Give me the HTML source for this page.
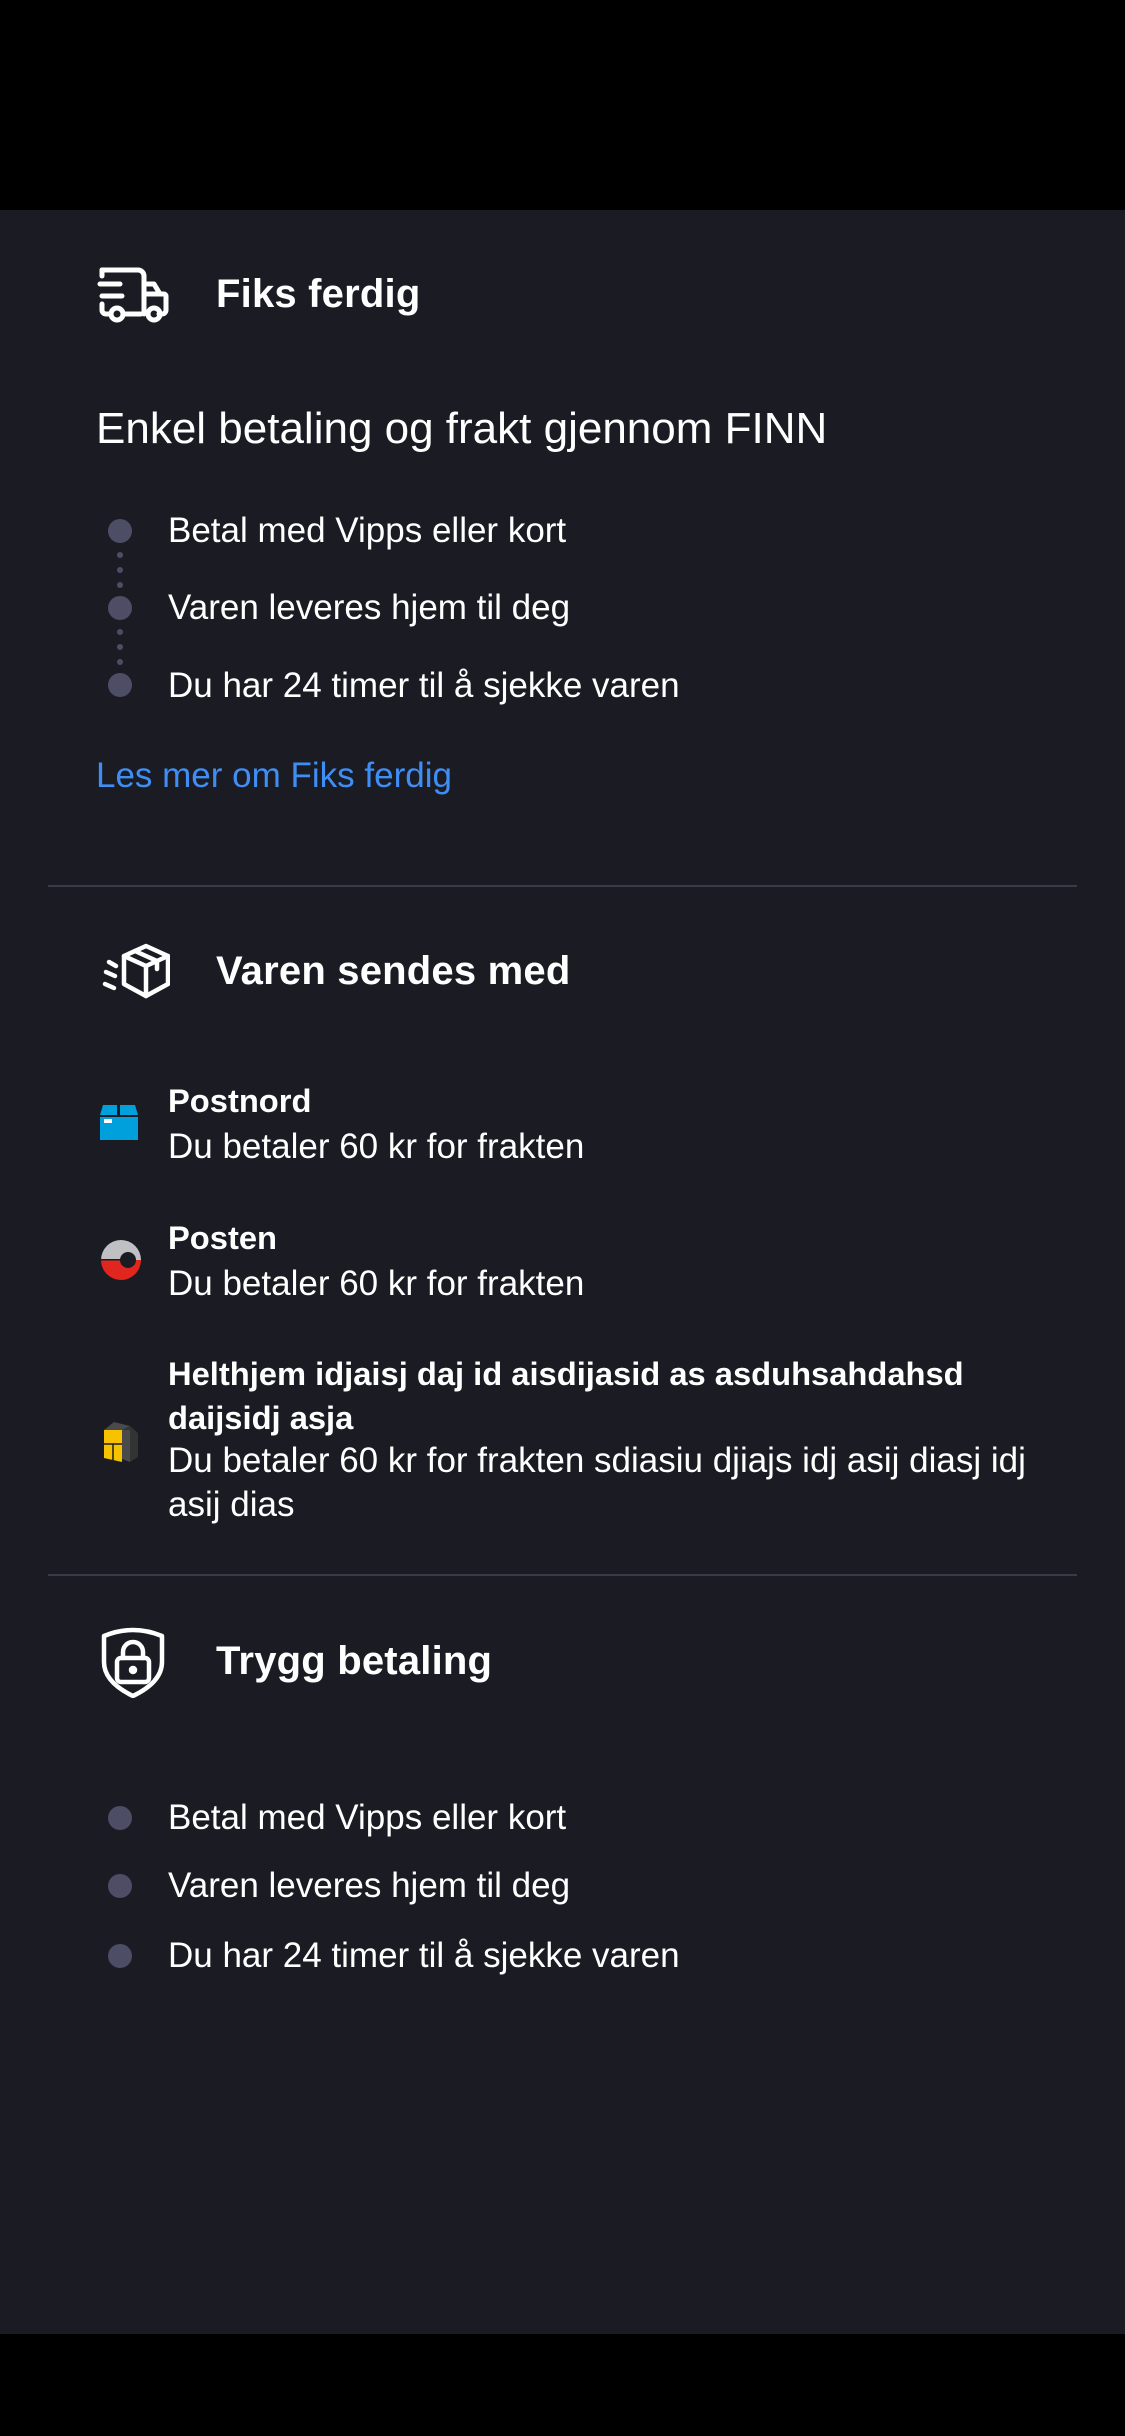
<!DOCTYPE html>
<html><head><meta charset="utf-8"><style>
*{margin:0;padding:0;box-sizing:border-box}
body{width:1125px;height:2436px;background:#1b1c23;position:relative;overflow:hidden;font-family:"Liberation Sans",sans-serif;color:#fff}
.blk{position:absolute;left:0;width:1125px;background:#000}
.t{position:absolute;white-space:nowrap;line-height:1}
.h{font-size:40px;font-weight:bold;letter-spacing:0.2px}
.b{font-size:35px;letter-spacing:0}
.bb{font-size:32.7px;font-weight:bold;letter-spacing:0}
.dot{position:absolute;width:24px;height:24px;border-radius:50%;background:#4d4d66}
.sd{position:absolute;width:6px;height:6px;border-radius:50%;background:#4d4d66}
.hr{position:absolute;left:48px;width:1029px;height:2px;background:#3a3b45}
svg{position:absolute}
</style></head><body>
<div class="blk" style="top:0;height:210px"></div>
<div class="blk" style="top:2334px;height:102px"></div>

<svg style="left:96px;top:262px" width="74" height="62" viewBox="0 0 74 62" fill="none" stroke="#fff" stroke-width="5" stroke-linecap="round" stroke-linejoin="round">
<path d="M6 8h36a6 6 0 0 1 6 6v38"/><path d="M6 8v6"/><path d="M48 22h10l6 10h4a2 2 0 0 1 2 2v14a4 4 0 0 1-4 4h-3"/><path d="M48 32h16"/>
<path d="M4 22h20M6 34h20"/><path d="M6 42v6a4 4 0 0 0 4 4h3"/><path d="M29 52h16"/>
<circle cx="21" cy="52" r="6"/><circle cx="58" cy="52" r="6"/></svg>
<div class="t h" style="left:216px;top:274px">Fiks ferdig</div>

<div class="t" style="left:96px;top:407px;font-size:44px;letter-spacing:0">Enkel betaling og frakt gjennom FINN</div>

<div class="dot" style="left:108px;top:519px"></div>
<div class="dot" style="left:108px;top:596px"></div>
<div class="dot" style="left:108px;top:673px"></div>
<div class="sd" style="left:117px;top:552px"></div><div class="sd" style="left:117px;top:567px"></div><div class="sd" style="left:117px;top:582px"></div>
<div class="sd" style="left:117px;top:629px"></div><div class="sd" style="left:117px;top:644px"></div><div class="sd" style="left:117px;top:659px"></div>
<div class="t b" style="left:168px;top:513px">Betal med Vipps eller kort</div>
<div class="t b" style="left:168px;top:590px">Varen leveres hjem til deg</div>
<div class="t b" style="left:168px;top:668px">Du har 24 timer til å sjekke varen</div>

<div class="t" style="left:96px;top:758px;font-size:35px;color:#3f8ef5">Les mer om Fiks ferdig</div>

<div class="hr" style="top:885px"></div>

<svg style="left:94px;top:942px" width="76" height="62" viewBox="0 0 76 62" fill="none" stroke="#fff" stroke-width="4.5" stroke-linecap="round" stroke-linejoin="round">
<path d="M24 8l-7-4M23 18l-9-4M22 30l-9-4" transform="translate(-2 16)"/>
<path d="M52 4l22 10v28l-22 12l-22-12V14z"/><path d="M30 14l22 10l22-10"/><path d="M52 24v30"/><path d="M41 9l22 10v8"/></svg>
<div class="t h" style="left:216px;top:951px">Varen sendes med</div>

<svg style="left:100px;top:1104px" width="38" height="36" viewBox="0 0 38 36"><path d="M3 1h14v10H0z M20 1h15l3 10H20z" fill="#00a0dc"/><rect x="0" y="13" width="38" height="23" fill="#00a0dc"/><rect x="4" y="15" width="8" height="4" fill="#fff"/></svg>
<div class="t bb" style="left:168px;top:1085px">Postnord</div>
<div class="t b" style="left:168px;top:1129px">Du betaler 60 kr for frakten</div>

<svg style="left:100px;top:1239px" width="42" height="42" viewBox="0 0 42 42"><path d="M1 21a20 20 0 0 1 40 0z" fill="#bfc0c4"/><path d="M1 21a20 20 0 0 0 40 0z" fill="#e0261f"/><circle cx="28" cy="21" r="8" fill="#1b1c23"/><rect x="1" y="20" width="21" height="1.5" fill="#1b1c23"/></svg>
<div class="t bb" style="left:168px;top:1222px">Posten</div>
<div class="t b" style="left:168px;top:1266px">Du betaler 60 kr for frakten</div>

<svg style="left:104px;top:1418px" width="34" height="44" viewBox="0 0 34 44"><path d="M0 12l10-8l16 4v36l-8-3z" fill="#4a4a4a"/><path d="M18 12l8-4l8 7v24l-8 5V12z" fill="#333"/><path d="M0 12h18v32L0 40z" fill="#f7c200"/><path d="M0 26h18M9 26v16" stroke="#1b1c23" stroke-width="1.5"/></svg>
<div class="t bb" style="left:168px;line-height:43.5px;top:1352px">Helthjem idjaisj daj id aisdijasid as asduhsahdahsd<br>daijsidj asja</div>
<div class="t b" style="left:168px;top:1439px;line-height:43.5px">Du betaler 60 kr for frakten sdiasiu djiajs idj asij diasj idj<br>asij dias</div>

<div class="hr" style="top:1574px"></div>

<svg style="left:100px;top:1626px" width="66" height="72" viewBox="0 0 66 72" fill="none" stroke="#fff" stroke-width="4.5" stroke-linecap="round" stroke-linejoin="round">
<path d="M4 10Q33 -2 62 10V36Q62 56 33 70Q4 56 4 36z"/><rect x="17" y="32" width="32" height="24" rx="4"/><path d="M23 32v-6a10 10 0 0 1 20 0v6"/><circle cx="33" cy="44" r="2" fill="#fff"/></svg>
<div class="t h" style="left:216px;top:1641px">Trygg betaling</div>

<div class="dot" style="left:108px;top:1806px"></div>
<div class="dot" style="left:108px;top:1874px"></div>
<div class="dot" style="left:108px;top:1944px"></div>
<div class="t b" style="left:168px;top:1800px">Betal med Vipps eller kort</div>
<div class="t b" style="left:168px;top:1868px">Varen leveres hjem til deg</div>
<div class="t b" style="left:168px;top:1938px">Du har 24 timer til å sjekke varen</div>
</body></html>
